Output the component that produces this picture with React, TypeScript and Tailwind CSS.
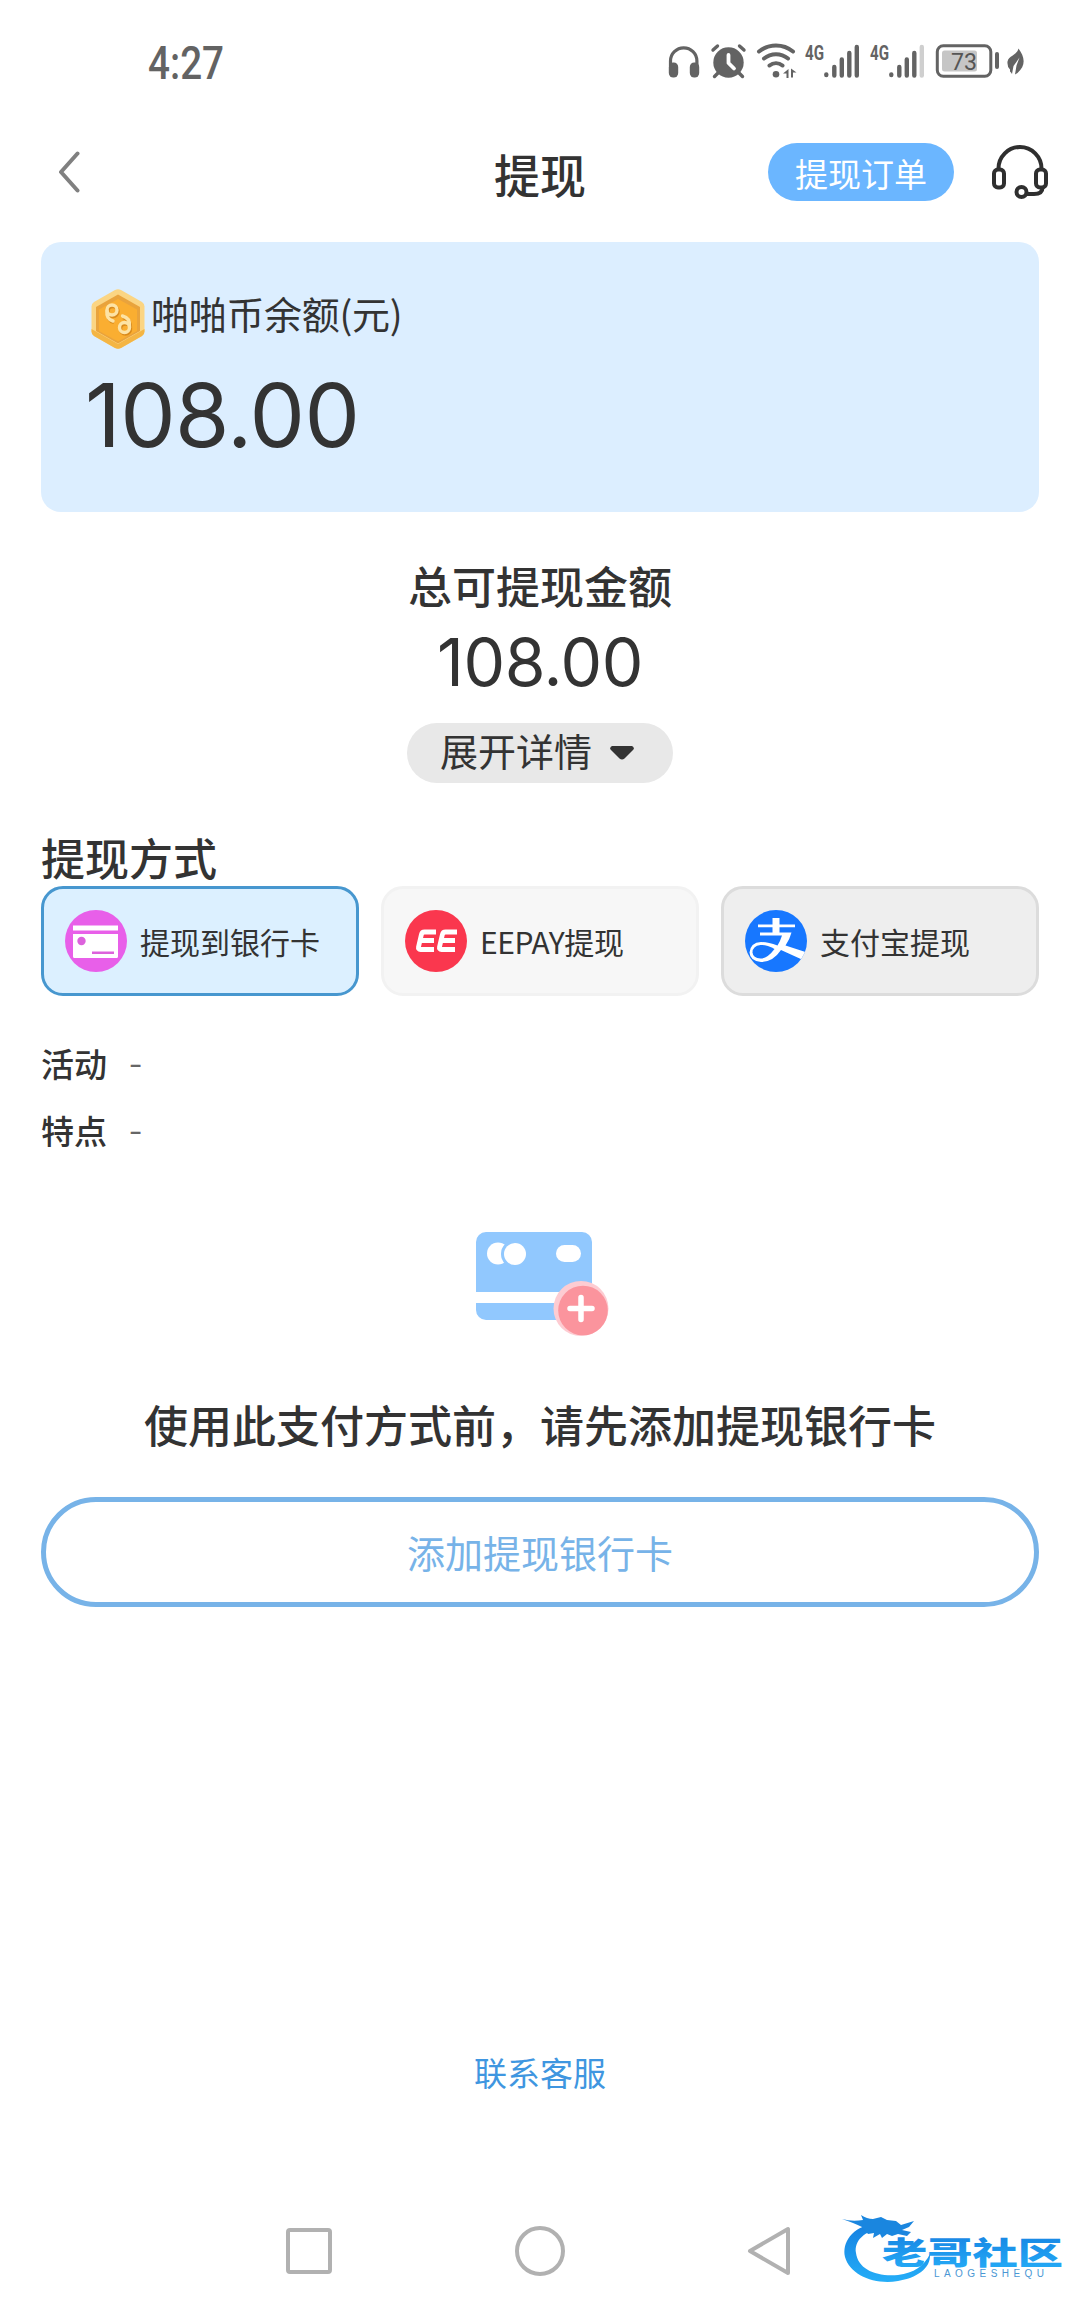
import React from 'react';

type IconProps = { className?: string };

const StatusIcons: React.FC = () => (
  <svg width='358' height='52' viewBox='0 -8 358 52' fill='none' className='text-[#636363]'>
    {/* headphones */}
    <path d='M2.5 22V17a13.2 13.2 0 0 1 26.4 0v5' stroke='currentColor' strokeWidth='3.2' />
    <rect x='0.8' y='18.5' width='9.4' height='15' rx='4.4' fill='currentColor' />
    <rect x='21.8' y='18.5' width='9.4' height='15' rx='4.4' fill='currentColor' />
    {/* alarm */}
    <circle cx='60.5' cy='18.5' r='15.2' fill='currentColor' />
    <path d='M45 6l4.500-4M76 6l-4.500-4M50 29l-3.500 3.500M71 29l3.500 3.500' stroke='currentColor' strokeWidth='3.400' strokeLinecap='round' />
    <path d='M60.500 11v8l5.500 5.500' stroke='#fff' strokeWidth='3.800' strokeLinecap='round' strokeLinejoin='round' />
    {/* wifi */}
    <path d='M91 7.500a27 27 0 0 1 34 0M96 14.500a19 19 0 0 1 24 0M101.500 21.500a10.500 10.500 0 0 1 13 0' stroke='currentColor' strokeWidth='4' strokeLinecap='round' />
    <circle cx='108' cy='30.300' r='3.300' fill='currentColor' />
    <path d='M115 29.500l5.500-4.500v9h-2v-4.500zM128.500 28.500l-5.500-4v9h2v-5z' fill='currentColor' />
    {/* signal, sim 1 */}
    <text x='137' y='16' fill='currentColor' fontFamily='Roboto, sans-serif' fontWeight='700' fontSize='20.500' textLength='19' lengthAdjust='spacingAndGlyphs'>4G</text>
    <path d='M158.300 30.500v.5M166.300 23v8.500M173.800 15.500v16M181.300 9v22.500M188.800 3v28.500' stroke='currentColor' strokeWidth='4.400' strokeLinecap='round' />
    {/* signal, sim 2 */}
    <text x='202' y='16' fill='currentColor' fontFamily='Roboto, sans-serif' fontWeight='700' fontSize='20.500' textLength='19' lengthAdjust='spacingAndGlyphs'>4G</text>
    <path d='M223.300 30.500v.5M231.300 23v8.500M238.800 15.500v16M246.300 9v22.500' stroke='currentColor' strokeWidth='4.400' strokeLinecap='round' />
    <path d='M253.800 3v28.500' stroke='#cfcfcf' strokeWidth='4.400' strokeLinecap='round' />
    {/* battery */}
    <rect x='269.300' y='1.800' width='53.500' height='30.500' rx='6' stroke='currentColor' strokeWidth='3' />
    <rect x='274' y='6.500' width='35' height='21' rx='2.500' fill='#c6c6c6' />
    <text x='283' y='25.500' fill='#555' fontFamily='Roboto, sans-serif' fontSize='24' textLength='26' lengthAdjust='spacingAndGlyphs'>73</text>
    <path d='M329 10v13' stroke='currentColor' strokeWidth='4' strokeLinecap='round' />
    {/* leaf */}
    <path d='M350.500 4.500c6 8 8 17-1 24.500l-2.500 1.500 1.500-9 3-8-6 8.500-1.500 8q-1-2-2-2.500v-2q-3-3-2.500-8c1.500-6 9.500-6 11-13z' fill='currentColor' />
  </svg>
);

const BackIcon: React.FC<IconProps> = ({ className }) => (
  <svg width='22' height='44' viewBox='0 0 22 44' fill='none' className={className}>
    <path d='M19.500 3.500L3 22l16.500 18.500' stroke='#808080' strokeWidth='4' strokeLinecap='round' strokeLinejoin='round' />
  </svg>
);

const HeadsetIcon: React.FC = () => (
  <svg width='56' height='54' viewBox='0 0 56 54' fill='none' stroke='#2f2f2f' strokeWidth='4'>
    <path d='M6.500 24v-.5a21.500 21.500 0 0 1 43 0v.5' />
    <rect x='2' y='24.500' width='10' height='18' rx='4' />
    <rect x='44' y='24.500' width='10' height='18' rx='4' />
    <circle cx='29.500' cy='47' r='5' />
    <path d='M34.500 49h7.500c5 0 8.500-2 8.500-6.500' />
  </svg>
);

const CoinIcon: React.FC = () => (
  <svg width='54' height='60' viewBox='0 0 54 60' fill='none'>
    <path d='M24 1q3-1.500 6 0l21 12q2.500 1.500 2.500 4.500v25q0 3-2.500 4.500l-21 12q-3 1.500-6 0l-21-12q-2.500-1.500-2.500-4.500v-25q0-3 2.500-4.500z' fill='#fbd583' />
    <path d='M.5 40v2.500q0 3 2.500 4.500l21 12q3 1.500 6 0l21-12q2.500-1.500 2.500-4.500V40L27 55z' fill='#f4b544' />
    <path d='M27 5.500l22 12.500v24L27 54.500 5 42V18z' fill='#e9a33c' />
    <path d='M27 10l19 10.500V42L27 52.500 8 42V20.500z' fill='#faae31' />
    <g stroke='#d98a1c' strokeWidth='3.400' transform='translate(1 1.500)'>
      <circle cx='21' cy='21' r='5' />
      <path d='M16 23q-.5 7 6 9' />
      <circle cx='33.500' cy='38.500' r='5' />
      <path d='M31 27q8 2 7.500 11' />
    </g>
    <g stroke='#fde3a4' strokeWidth='3.400' strokeLinecap='round'>
      <circle cx='21' cy='21' r='5' />
      <path d='M16 22q-1 8 6 10' />
      <circle cx='33.500' cy='38.500' r='5' />
      <path d='M31.500 27q8 2 7 11' />
    </g>
  </svg>
);

const BankIcon: React.FC = () => (
  <svg width='62' height='62' viewBox='0 0 62 62'>
    <circle cx='31' cy='31' r='31' fill='#e85fe9' />
    <path d='M8 15.500h45v5H8zM8 24h45v22.500a1.500 1.500 0 0 1-1.500 1.500h-42A1.500 1.500 0 0 1 8 46.500z' fill='#fff' />
    <circle cx='16.500' cy='31' r='4.200' fill='#dc62dc' />
    <path d='M27 41.500h22v2.500H27z' fill='#dc62dc' />
  </svg>
);

const EepayIcon: React.FC = () => (
  <svg width='62' height='62' viewBox='0 0 62 62'>
    <circle cx='31' cy='31' r='31' fill='#fa374e' />
    <g fill='none' stroke='#fff' strokeWidth='4.800' strokeLinejoin='round'>
      <path d='M31 22H19.500q-2.500 0-3.100 2.500l-2.900 12.500q-.5 2.500 2 2.500H29M15 30.500h14' />
      <path d='M52 22H40.500q-2.500 0-3.100 2.500l-2.900 12.500q-.5 2.500 2 2.500H50M36 30.500h14' />
    </g>
  </svg>
);

const AlipayIcon: React.FC = () => (
  <svg width='62' height='62' viewBox='0 0 62 62'>
    <clipPath id='alipay'>
      <circle cx='31' cy='31' r='31' />
    </clipPath>
    <g clipPath='url(#alipay)'>
      <rect width='62' height='62' fill='#1777ff' />
      <path d='M27.500 8h7v6.500H50v2.800H34.500v5.200h12q-1.800 7-6 13L62 42.500l-4 7.500-22-10q-8 12-20 12-11-1-11.500-9.500Q5.500 32.500 16 32q7 .2 16.500 3.500 3-5 4.500-10H15v-3h12.500v-5.200H13v-2.800h14.500z' fill='#fff' />
      <path d='M29.500 39q-8-4.500-14-4Q7.500 36 7.500 42.500 8 48 15.500 48.500q7 0 14-9.500z' fill='#1777ff' />
    </g>
  </svg>
);

const AddCardArt: React.FC = () => (
  <svg width='134' height='106' viewBox='0 0 134 106'>
    <path d='M10 0h96a10 10 0 0 1 10 10v50H0V10A10 10 0 0 1 10 0zM0 71h116v7a10 10 0 0 1-10 10H10A10 10 0 0 1 0 78z' fill='#91c8fe' />
    <circle cx='22' cy='21.500' r='11' fill='#fff' />
    <circle cx='39' cy='22' r='14' fill='#91c8fe' />
    <circle cx='39' cy='22' r='11' fill='#fff' />
    <rect x='80' y='13' width='25' height='17' rx='8.500' fill='#fff' />
    <circle cx='105' cy='76.500' r='27.500' fill='#fdccd2' />
    <circle cx='107' cy='78.500' r='24.800' fill='#fb949d' />
    <path d='M105 65.500v22M94 76.500h22' stroke='#fff' strokeWidth='5.500' strokeLinecap='round' />
  </svg>
);

const DragonLogo: React.FC = () => (
  <svg width='226' height='72' viewBox='0 0 226 72'>
    <defs>
      <linearGradient id='sea' x1='0' y1='0' x2='0' y2='1'>
        <stop offset='0' stopColor='#157fe0' />
        <stop offset='1' stopColor='#25aef8' />
      </linearGradient>
    </defs>
    {/* body */}
    <path d='M34 8C9 12 0 28 3 42c5 18 29 28 53 24 18-3 33-12 32-27-6 12-16 19-32 21-22 2-40-6-42-22C12 26 22 16 40 13z' fill='url(#sea)' />
    {/* head, horns and whiskers */}
    <path d='M0 4q10 3 21 1l-2-5q6 4 12 4l8-2 6 3 9 1 5 4 13-4-5 6-7 3 9 2-4 4-9-2-6 2-5-2-5 4-2-4-7 4 1-5-6 1-6-7Q12 8 0 4z' fill='#1a86df' />
    <text x='40' y='49' fill='url(#sea)' fontFamily='"Noto Sans CJK SC", sans-serif' fontWeight='900' fontSize='31' textLength='181' lengthAdjust='spacingAndGlyphs'>老哥社区</text>
    <text x='92' y='62' fill='#4b97d4' fontFamily='"Liberation Sans", sans-serif' fontSize='10' textLength='110'>LAOGESHEQU</text>
  </svg>
);

const methods = [
  { label: '提现到银行卡', icon: <BankIcon />, box: 'border-[#4797cf] bg-[#dcf0ff]' },
  { label: 'EEPAY提现', icon: <EepayIcon />, box: 'border-[#f2f2f2] bg-[#f7f7f7] tracking-[-0.4px]' },
  { label: '支付宝提现', icon: <AlipayIcon />, box: 'border-[#dcdcdc] bg-[#eeeeee]' },
];

const notes = ['活动', '特点'];

const App: React.FC = () => {
  return (
    <main className='flex flex-col w-[1080px] h-[2310px] overflow-hidden bg-white text-[#333] font-["Noto_Sans_CJK_SC",sans-serif]'>
      {/* Status bar */}
      <div className='flex items-center justify-between h-[124px] pl-[148px] pr-[54px]'>
        <span className='font-[Roboto,sans-serif] font-medium text-[46px] text-[#636363] origin-left scale-x-[0.84] leading-none mt-0.5'>4:27</span>
        <StatusIcons />
      </div>

      {/* Header */}
      <header className='grid grid-cols-[1fr_auto_1fr] items-center h-[96px] pl-[58px] pr-[32px]'>
        <BackIcon />
        <h1 className='font-medium text-[46px] leading-none -ml-[26px] pt-0.5'>提现</h1>
        <div className='flex items-center justify-end gap-[38px]'>
          <button className='h-[58px] w-[186px] rounded-full bg-[#6bb6ff] text-white text-[33px] leading-none pt-0.5'>提现订单</button>
          <HeadsetIcon />
        </div>
      </header>

      {/* Balance */}
      <section className='mx-[41px] mt-[22px] h-[270px] rounded-[20px] bg-[#dceeff] pl-[50px] pt-[43px]'>
        <div className='flex items-center gap-1.5'>
          <CoinIcon />
          <span className='text-[38px] leading-[56px] pb-3 tracking-[-0.3px]'>啪啪币余额(元)</span>
        </div>
        <p className='font-[Inter,sans-serif] text-[88px] leading-none -ml-1.5 mt-[18px] tracking-[-0.6px]'>108.00</p>
      </section>

      {/* Available amount */}
      <section className='flex flex-col items-center mt-[48px]'>
        <h2 className='font-medium text-[44px] leading-[50px]'>总可提现金额</h2>
        <p className='font-[Inter,sans-serif] text-[66px] leading-[80px] mt-[12px] tracking-[-0.4px]'>108.00</p>
        <button className='flex items-center gap-[18px] h-[60px] w-[266px] pl-[33px] mt-[21px] rounded-full bg-[#e8e8e8] text-[38px] leading-none'>
          <span className='pb-1.5'>展开详情</span>
          <svg width='24' height='14' viewBox='0 0 24 14'>
            <path d='M2 0h20q3 1.500 1 4l-8.500 8.500q-2.500 2-5 0L1 4Q-1 1.500 2 0z' fill='#333' />
          </svg>
        </button>
      </section>

      {/* Methods */}
      <section className='mx-[41px] mt-[48px]'>
        <h2 className='font-medium text-[44px] leading-[53px] mb-0.5'>提现方式</h2>
        <div className='grid grid-cols-3 gap-[22px]'>
          {methods.map((m) => (
            <div key={m.label} className={`flex items-center gap-[13px] h-[110px] pl-[21px] rounded-[22px] border-3 ${m.box}`}>
              {m.icon}
              <span className='text-[30px] leading-none'>{m.label}</span>
            </div>
          ))}
        </div>
        <dl className='mt-[34px]'>
          {notes.map((n) => (
            <div key={n} className='flex items-center gap-[22px] h-[67px] text-[33px] leading-none'>
              <dt className='font-medium'>{n}</dt>
              <dd className='text-[#666] origin-left scale-x-115 pb-1'>-</dd>
            </div>
          ))}
        </dl>
      </section>

      {/* Add card */}
      <section className='flex flex-col items-center mx-[41px] mt-[68px]'>
        <div className='pl-1.5'>
          <AddCardArt />
        </div>
        <p className='font-medium text-[44px] leading-[50px] mt-[61px]'>使用此支付方式前，请先添加提现银行卡</p>
        <button className='w-full h-[110px] mt-[48px] rounded-full border-5 border-[#77b3e8] text-[38px] leading-none text-[#77b3e8]'>添加提现银行卡</button>
      </section>

      <a className='mt-auto mb-[100px] text-center text-[33px] leading-[40px] text-[#3f96e0]'>联系客服</a>

      {/* System navigation */}
      <nav className='flex items-center h-[118px] pl-[286px]'>
        <svg width='46' height='46' viewBox='0 0 46 46' fill='none' stroke='#b1b1b1' strokeWidth='4'>
          <rect x='2' y='2' width='42' height='42' rx='2' />
        </svg>
        <svg width='50' height='50' viewBox='0 0 50 50' fill='none' stroke='#b1b1b1' strokeWidth='4' className='ml-[183px]'>
          <circle cx='25' cy='25' r='23' />
        </svg>
        <svg width='46' height='50' viewBox='0 0 46 50' fill='none' stroke='#b1b1b1' strokeWidth='4' strokeLinejoin='round' className='ml-[181px]'>
          <path d='M42 3v44L4 25z' />
        </svg>
        <div className='ml-[50px]'>
          <DragonLogo />
        </div>
      </nav>
    </main>
  );
};

export default App;
